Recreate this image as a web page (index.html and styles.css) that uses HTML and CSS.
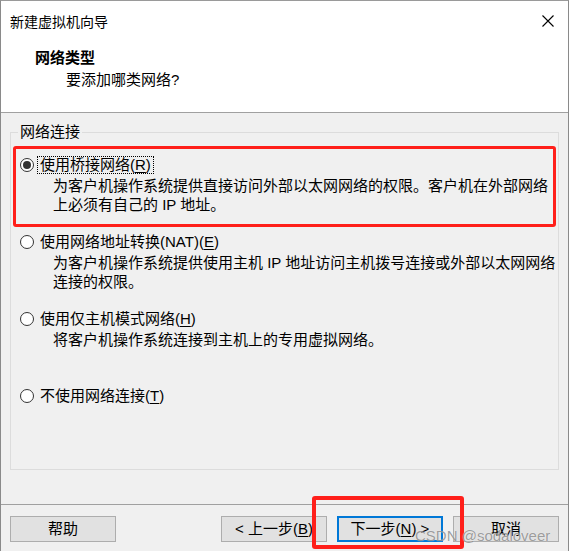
FILE: index.html
```html
<!DOCTYPE html>
<html lang="zh-CN">
<head>
<meta charset="utf-8">
<title>新建虚拟机向导</title>
<link rel="stylesheet" href="styles.css">
</head>
<body>
<div class="window">
  <div class="top">
    <div class="titlebar">
      <span class="title">新建虚拟机向导</span>
      <svg class="close" width="12" height="12" viewBox="0 0 12 12"><path d="M0.5 0.5 L11.5 11.5 M11.5 0.5 L0.5 11.5" stroke="#000" stroke-width="1.1" fill="none"/></svg>
    </div>
    <div class="head">
      <div class="head-title">网络类型</div>
      <div class="head-sub">要添加哪类网络?</div>
    </div>
  </div>
  <div class="body">
    <fieldset class="group">
      <legend>网络连接</legend>
      <div class="option">
        <div class="row"><span class="radio checked"></span><span class="label focus">使用桥接网络(<u>R</u>)</span></div>
        <div class="desc"><div>为客户机操作系统提供直接访问外部以太网网络的权限。客户机在外部网络</div><div>上必须有自己的 IP 地址。</div></div>
      </div>
      <div class="option">
        <div class="row"><span class="radio"></span><span class="label">使用网络地址转换(NAT)(<u>E</u>)</span></div>
        <div class="desc"><div>为客户机操作系统提供使用主机 IP 地址访问主机拨号连接或外部以太网网络</div><div>连接的权限。</div></div>
      </div>
      <div class="option">
        <div class="row"><span class="radio"></span><span class="label">使用仅主机模式网络(<u>H</u>)</span></div>
        <div class="desc"><div>将客户机操作系统连接到主机上的专用虚拟网络。</div></div>
      </div>
      <div class="option">
        <div class="row"><span class="radio"></span><span class="label">不使用网络连接(<u>T</u>)</span></div>
      </div>
    </fieldset>
  </div>
  <div class="footer">
    <button class="btn">帮助</button>
    <div class="nav">
      <button class="btn">&lt; 上一步(<u>B</u>)</button>
      <button class="btn default">下一步(<u>N</u>) &gt;</button>
      <button class="btn">取消</button>
    </div>
  </div>
  <div class="mark mark-bridge"></div>
  <div class="mark mark-next"></div>
  <div class="watermark">CSDN @sodaloveer</div>
</div>
</body>
</html>
```
FILE: styles.css
```css
* { box-sizing: border-box; }
html, body { margin: 0; padding: 0; background: #ffffff; }
body {
  font-family: "Liberation Sans", "Noto Sans CJK SC", sans-serif;
  font-size: 15px;
  color: #000;
}
.window {
  position: relative;
  width: 569px;
  height: 551px;
  border-top: 1px solid #9a9a9a;
  border-left: 1px solid #8a8a8a;
  border-right: 1px solid #8a8a8a;
  background: #f0f0f0;
  display: flex;
  flex-direction: column;
}
.top {
  height: 112px;
  background: #ffffff;
  border-bottom: 1px solid #a0a0a0;
}
.titlebar {
  height: 42px;
  display: flex;
  align-items: center;
  justify-content: space-between;
  padding: 0 14px 0 9px;
}
.title { font-size: 14px; line-height: 20px; }
.close { display: block; margin-top: -2px; }
.head { padding: 5px 0 0 34px; }
.head-title { font-weight: bold; line-height: 20px; }
.head-sub { margin-top: 2px; padding-left: 31px; line-height: 20px; }
.body {
  flex: 1;
  padding: 9px 9px 0 9px;
}
.group {
  margin: 0;
  height: 348px;
  border: 1px solid #dcdcdc;
  padding: 13px 0 0 0;
  display: flex;
  flex-direction: column;
  gap: 18px;
}
.group legend {
  margin-left: 7px;
  padding: 0 2px;
  line-height: 20px;
}
.option { padding-left: 9px; }
.row {
  height: 20px;
  display: flex;
  align-items: center;
}
.radio {
  width: 14px;
  height: 14px;
  border: 1px solid #333333;
  border-radius: 50%;
  background: #ffffff;
  position: relative;
  flex: none;
}
.radio.checked::after {
  content: "";
  position: absolute;
  left: 2px;
  top: 2px;
  width: 8px;
  height: 8px;
  border-radius: 50%;
  background: #333333;
}
.label {
  margin-left: 3px;
  padding: 0 2px;
  line-height: 16px;
  border: 1px dotted transparent;
  white-space: nowrap;
}
.label.focus { border-color: #000; }
.desc {
  margin-top: 1px;
  padding-left: 33px;
  line-height: 19px;
  min-height: 38px;
  white-space: nowrap;
}
u { text-underline-offset: 2px; }
.footer {
  height: 47px;
  border-top: 1px solid #a0a0a0;
  padding: 11px 9px 0 9px;
  display: flex;
  justify-content: space-between;
  align-items: flex-start;
}
.nav { display: flex; gap: 10px; }
.btn {
  width: 106px;
  height: 26px;
  padding: 0;
  border: 1px solid #adadad;
  background: #e1e1e1;
  font-family: "Liberation Sans", "Noto Sans CJK SC", sans-serif;
  font-size: 15px;
  color: #000;
  line-height: 22px;
}
.btn.default { border: 2px solid #0078d7; }
.mark {
  position: absolute;
  border: 3px solid #ff1f1a;
  border-radius: 3px;
}
.mark-bridge { left: 12px; top: 145px; width: 543px; height: 81px; }
.mark-next { left: 311px; top: 495px; width: 152px; height: 53px; border-width: 4px; }
.watermark {
  position: absolute;
  left: 414px;
  top: 525px;
  font-family: "Liberation Sans", sans-serif;
  font-size: 15px;
  line-height: 20px;
  color: rgba(105, 105, 105, 0.65);
  text-shadow: 0 0 1px rgba(255, 255, 255, 0.8);
  white-space: nowrap;
}
```
